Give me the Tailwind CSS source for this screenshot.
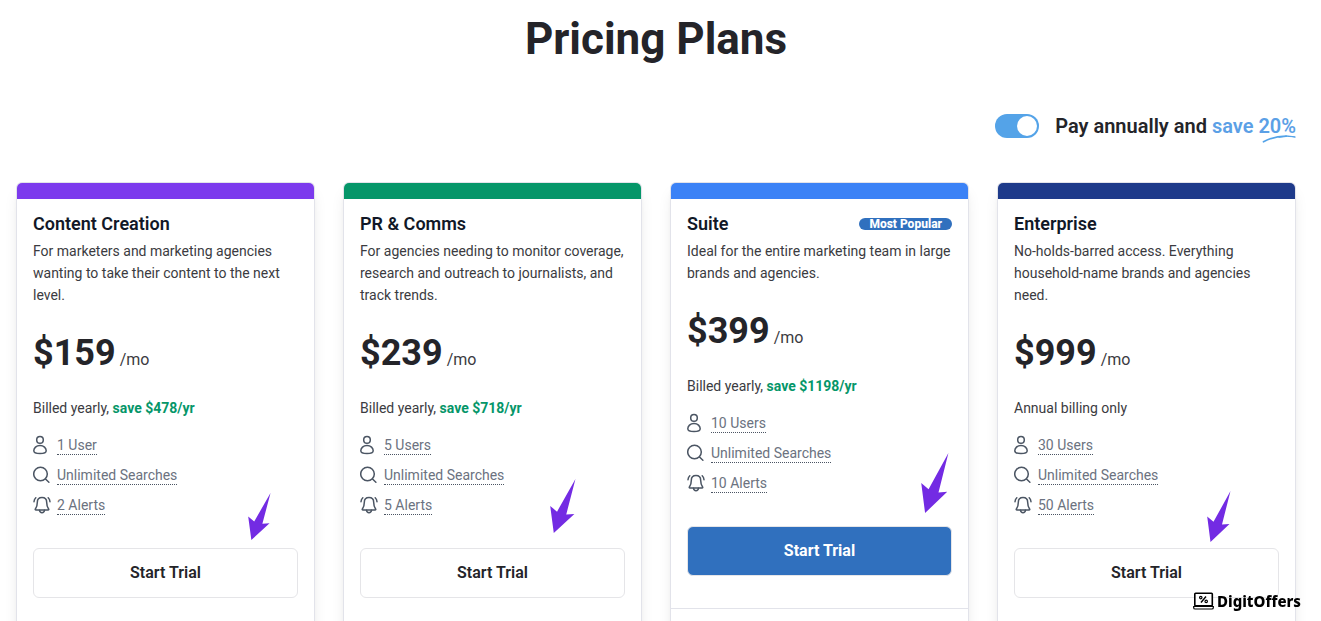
<!DOCTYPE html>
<html lang="en">
<head>
<meta charset="utf-8">
<meta name="viewport" content="width=device-width, initial-scale=1">
<title>Pricing Plans</title>
<script src="https://cdn.jsdelivr.net/npm/@tailwindcss/browser@4"></script>
</head>
<body class="bg-white font-['Roboto',sans-serif] text-[#242429]">
<svg class="hidden" aria-hidden="true">
  <symbol id="user" viewBox="0 0 16 20"><g fill="none" stroke="currentColor" stroke-width="1.5"><circle cx="7" cy="4.9" r="3.3"/><path d="M7 10.400c-3.800 0-6.200 2.700-6.200 5.400 0 2.100 2.400 2.800 6.200 2.800s6.200-.7 6.200-2.800c0-2.700-2.400-5.400-6.200-5.400Z"/></g></symbol>
  <symbol id="search" viewBox="0 0 18 18"><g fill="none" stroke="currentColor" stroke-width="1.5" stroke-linecap="round"><circle cx="7.500" cy="8" r="6.800"/><path d="m12.500 13 3.400 3.200"/></g></symbol>
  <symbol id="bell" viewBox="0 0 18 18"><g fill="none" stroke="currentColor" stroke-width="1.5" stroke-linecap="round" stroke-linejoin="round"><path d="M9 1.600c-3 0-4.700 2-4.700 4.800 0 3.500-.7 4.900-1.900 6.600-.4.6-.1 1 .5 1h12.200c.6 0 .9-.4.5-1-1.200-1.700-1.900-3.100-1.900-6.600C13.700 3.600 12 1.600 9 1.600Z"/><path d="M6.500 14.200c.2 1.500 1.200 2.500 2.500 2.500s2.300-1 2.500-2.500M2.800 1.700C1.700 2.700 1.100 4.100 1 5.700M15.200 1.700c1.100 1 1.700 2.400 1.800 4"/></g></symbol>
  <symbol id="arrow" viewBox="0 0 24 48" preserveAspectRatio="none"><path fill="#732be3" d="M23.500 0 15 31.500 22.500 31 3.500 48 .2 24 6.500 29Z"/></symbol>
</svg>

<main class="flex h-screen flex-col overflow-hidden pr-[25px] pl-4">
  <h1 class="pt-3 text-center text-[44px] leading-[54px] font-bold">Pricing Plans</h1>

  <div class="mt-[45px] flex h-[30px] items-center justify-end gap-4">
    <input id="annual" type="checkbox" role="switch" checked class="peer sr-only">
    <label for="annual" class="flex h-6 w-11 cursor-pointer items-center justify-end rounded-full bg-[#54a3e8] p-[2px]" aria-label="Annual billing"><span class="size-5 rounded-full bg-white"></span></label>
    <label for="annual" class="text-xl leading-[30px] font-semibold">Pay annually and <span class="text-[#5ba0e6]">save <span class="relative">20%<svg class="absolute top-[21px] left-1 h-2 w-[34px]" viewBox="0 0 34 8" fill="none" stroke="#54a3e8" stroke-linecap="round"><path stroke-width="1.700" d="M1.500 6.800C9 2.500 16 1.300 24 1.200"/><path stroke-width="1" d="M17 2.300C23 1 29 1.200 33 2.200M24 .8 33 1.800"/></svg></span></span></label>
  </div>

  <div class="mt-[41px] grid flex-1 grid-cols-4 gap-7">

    <section class="relative flex flex-col rounded-t-md border border-b-0 border-[#e2e3ea] shadow-lg">
      <div class="h-4 rounded-t-[5px] bg-[#7c3aed]"></div>
      <div class="flex flex-col p-4 pt-[13px] pb-8">
        <h2 class="text-lg leading-6 font-semibold text-[#111827]">Content Creation</h2>
        <p class="mt-1 text-sm leading-[22px] text-[#3b3b41]">For marketers and marketing agencies wanting to take their content to the next level.</p>
        <p class="mt-[22px] flex items-baseline gap-1 leading-[50px]"><span class="text-4xl leading-[50px] font-bold">$159</span><span class="text-base text-[#3b3b41]">/mo</span></p>
        <p class="mt-[19px] text-sm leading-[22px] text-[#3b3b41]">Billed yearly, <strong class="font-bold text-[#059669]">save $478/yr</strong></p>
        <ul class="mt-[11px] flex flex-col text-sm leading-[18px] text-[#6b7280]">
          <li class="flex h-[30px] items-center"><svg class="mr-2 h-5 w-4 text-[#4b5563]"><use href="#user"/></svg><span class="border-b border-dotted border-[#4b5563]">1 User</span></li>
          <li class="flex h-[30px] items-center"><svg class="mr-1.5 size-[18px] text-[#4b5563]"><use href="#search"/></svg><span class="border-b border-dotted border-[#4b5563]">Unlimited Searches</span></li>
          <li class="flex h-[30px] items-center"><svg class="mr-1.5 size-[18px] text-[#4b5563]"><use href="#bell"/></svg><span class="border-b border-dotted border-[#4b5563]">2 Alerts</span></li>
        </ul>
        <button class="mt-7 h-[50px] cursor-pointer rounded-md border border-[#e5e5e8] text-base font-semibold">Start Trial</button>
      </div>
      <svg class="absolute top-[310px] right-[43px] h-[47px] w-[23px]" aria-hidden="true"><use href="#arrow"/></svg>
    </section>

    <section class="relative flex flex-col rounded-t-md border border-b-0 border-[#e2e3ea] shadow-lg">
      <div class="h-4 rounded-t-[5px] bg-[#059669]"></div>
      <div class="flex flex-col p-4 pt-[13px] pb-8">
        <h2 class="text-lg leading-6 font-semibold text-[#111827]">PR &amp; Comms</h2>
        <p class="mt-1 text-sm leading-[22px] text-[#3b3b41]">For agencies needing to monitor coverage, research and outreach to journalists, and track trends.</p>
        <p class="mt-[22px] flex items-baseline gap-1 leading-[50px]"><span class="text-4xl leading-[50px] font-bold">$239</span><span class="text-base text-[#3b3b41]">/mo</span></p>
        <p class="mt-[19px] text-sm leading-[22px] text-[#3b3b41]">Billed yearly, <strong class="font-bold text-[#059669]">save $718/yr</strong></p>
        <ul class="mt-[11px] flex flex-col text-sm leading-[18px] text-[#6b7280]">
          <li class="flex h-[30px] items-center"><svg class="mr-2 h-5 w-4 text-[#4b5563]"><use href="#user"/></svg><span class="border-b border-dotted border-[#4b5563]">5 Users</span></li>
          <li class="flex h-[30px] items-center"><svg class="mr-1.5 size-[18px] text-[#4b5563]"><use href="#search"/></svg><span class="border-b border-dotted border-[#4b5563]">Unlimited Searches</span></li>
          <li class="flex h-[30px] items-center"><svg class="mr-1.5 size-[18px] text-[#4b5563]"><use href="#bell"/></svg><span class="border-b border-dotted border-[#4b5563]">5 Alerts</span></li>
        </ul>
        <button class="mt-7 h-[50px] cursor-pointer rounded-md border border-[#e5e5e8] text-base font-semibold">Start Trial</button>
      </div>
      <svg class="absolute top-[296px] right-[65px] h-[54px] w-[26px]" aria-hidden="true"><use href="#arrow"/></svg>
    </section>

    <section class="relative flex flex-col rounded-t-md border border-b-0 border-[#e2e3ea] shadow-lg">
      <div class="h-4 rounded-t-[5px] bg-[#3b82f6]"></div>
      <div class="flex flex-col border-b border-[#e2e3ea] p-4 pt-[13px] pb-8">
        <div class="flex items-center justify-between">
          <h2 class="text-lg leading-6 font-semibold text-[#111827]">Suite</h2>
          <span class="rounded-full bg-[#3070be] px-2.5 text-xs leading-3 font-extrabold text-white">Most Popular</span>
        </div>
        <p class="mt-1 text-sm leading-[22px] text-[#3b3b41]">Ideal for the entire marketing team in large brands and agencies.</p>
        <p class="mt-[22px] flex items-baseline gap-1 leading-[50px]"><span class="text-4xl leading-[50px] font-bold">$399</span><span class="text-base text-[#3b3b41]">/mo</span></p>
        <p class="mt-[19px] text-sm leading-[22px] text-[#3b3b41]">Billed yearly, <strong class="font-bold text-[#059669]">save $1198/yr</strong></p>
        <ul class="mt-[11px] flex flex-col text-sm leading-[18px] text-[#6b7280]">
          <li class="flex h-[30px] items-center"><svg class="mr-2 h-5 w-4 text-[#4b5563]"><use href="#user"/></svg><span class="border-b border-dotted border-[#4b5563]">10 Users</span></li>
          <li class="flex h-[30px] items-center"><svg class="mr-1.5 size-[18px] text-[#4b5563]"><use href="#search"/></svg><span class="border-b border-dotted border-[#4b5563]">Unlimited Searches</span></li>
          <li class="flex h-[30px] items-center"><svg class="mr-1.5 size-[18px] text-[#4b5563]"><use href="#bell"/></svg><span class="border-b border-dotted border-[#4b5563]">10 Alerts</span></li>
        </ul>
        <button class="mt-7 h-[50px] cursor-pointer rounded-md border border-[#e5e5e8] bg-[#3070be] text-base font-bold text-white">Start Trial</button>
      </div>
      <svg class="absolute top-[270px] right-[19px] h-[60px] w-[28px]" aria-hidden="true"><use href="#arrow"/></svg>
    </section>

    <section class="relative flex flex-col rounded-t-md border border-b-0 border-[#e2e3ea] shadow-lg">
      <div class="h-4 rounded-t-[5px] bg-[#1e3a8a]"></div>
      <div class="flex flex-col p-4 pt-[13px] pb-8">
        <h2 class="text-lg leading-6 font-semibold text-[#111827]">Enterprise</h2>
        <p class="mt-1 text-sm leading-[22px] text-[#3b3b41]">No-holds-barred access. Everything household-name brands and agencies need.</p>
        <p class="mt-[22px] flex items-baseline gap-1 leading-[50px]"><span class="text-4xl leading-[50px] font-bold">$999</span><span class="text-base text-[#3b3b41]">/mo</span></p>
        <p class="mt-[19px] text-sm leading-[22px] text-[#3b3b41]">Annual billing only</p>
        <ul class="mt-[11px] flex flex-col text-sm leading-[18px] text-[#6b7280]">
          <li class="flex h-[30px] items-center"><svg class="mr-2 h-5 w-4 text-[#4b5563]"><use href="#user"/></svg><span class="border-b border-dotted border-[#4b5563]">30 Users</span></li>
          <li class="flex h-[30px] items-center"><svg class="mr-1.5 size-[18px] text-[#4b5563]"><use href="#search"/></svg><span class="border-b border-dotted border-[#4b5563]">Unlimited Searches</span></li>
          <li class="flex h-[30px] items-center"><svg class="mr-1.5 size-[18px] text-[#4b5563]"><use href="#bell"/></svg><span class="border-b border-dotted border-[#4b5563]">50 Alerts</span></li>
        </ul>
        <button class="mt-7 h-[50px] cursor-pointer rounded-md border border-[#e5e5e8] text-base font-semibold">Start Trial</button>
      </div>
      <svg class="absolute top-[308px] right-[64px] h-[51px] w-[24px]" aria-hidden="true"><use href="#arrow"/></svg>
    </section>
  </div>
</main>

<div class="fixed right-5 bottom-2 flex items-center gap-[3px] text-black">
  <svg class="h-[18px] w-[21px]" viewBox="0 0 21 18" fill="none" stroke="#000" aria-hidden="true"><rect x="1.800" y="1.300" width="17.500" height="12.500" rx=".8" fill="#fff" stroke-width="1.600"/><path fill="#fff" d="M.7 14.500h19.600v1.200q0 1.300-1.500 1.300H2.200Q.7 17 .7 15.700Z" stroke-width="1.200"/><path stroke-width="1.400" d="m8 10.500 5-6"/><circle cx="7.800" cy="5.600" r="1.200" stroke-width="1.200"/><circle cx="13.200" cy="9.400" r="1.200" stroke-width="1.200"/></svg>
  <span class="font-['Noto_Sans',sans-serif] text-[15px] leading-6 font-extrabold">DigitOffers</span>
</div>
</body>
</html>
